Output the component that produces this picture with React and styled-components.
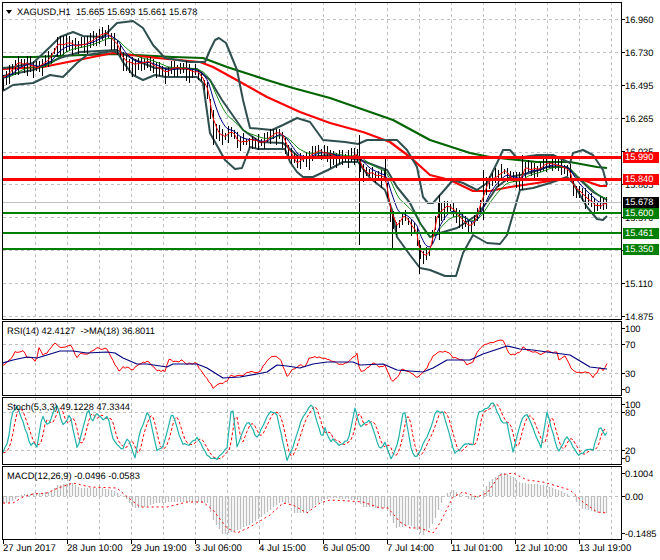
import styled, { createGlobalStyle } from 'styled-components';

const GlobalStyle = createGlobalStyle`
  html, body { margin: 0; padding: 0; background: #fff; }
  body { width: 660px; height: 560px; overflow: hidden; font-family: "Liberation Sans", Arial, sans-serif; text-rendering: geometricPrecision; }
`;

const Page = styled.div`
  width: 660px;
  height: 560px;
  padding: 2px 0 0 2px;
  box-sizing: border-box;
  display: flex;
  flex-direction: column;
  gap: 1px;
  background: #fff;
`;

const Pane = styled.div`
  display: flex;
  height: ${(p) => p.$h}px;
`;

const Plot = styled.div`
  position: relative;
  width: 620px;
  height: 100%;
  box-sizing: border-box;
  border: 1px solid #000;
  overflow: hidden;
  svg { display: block; }
`;

const Legend = styled.div`
  position: absolute;
  left: ${(p) => p.$left}px;
  top: ${(p) => p.$top}px;
  display: flex;
  align-items: center;
  gap: 5px;
  font-size: 9.3px;
  line-height: 12px;
  color: #000;
  white-space: pre;
`;

const Arrow = styled.span`
  width: 0;
  height: 0;
  border-left: 3.5px solid transparent;
  border-right: 3.5px solid transparent;
  border-top: 4px solid #000;
`;

const Scale = styled.div`
  position: relative;
  width: 38px;
  font-size: 9.3px;
  color: #000;
`;

const Level = styled.span`
  position: absolute;
  left: 3px;
  top: ${(p) => p.$y - 5}px;
  line-height: 12px;
  &::before {
    content: '';
    position: absolute;
    left: -3px;
    top: 5px;
    width: 3px;
    height: 1px;
    background: #000;
  }
`;

const PriceTag = styled.span`
  position: absolute;
  left: 1px;
  top: ${(p) => p.$y - 5}px;
  width: 36px;
  height: 11px;
  padding-left: 2px;
  box-sizing: border-box;
  line-height: 11px;
  color: #fff;
  background: ${(p) => p.$bg};
`;

const TimeAxis = styled.div`
  display: flex;
  margin-left: 1px;
  margin-top: -1px;
  font-size: 9.6px;
  color: #000;
`;

const TimeCell = styled.div`
  position: relative;
  width: 64px;
  height: 16px;
  padding: 3px 0 0 0;
  box-sizing: border-box;
  line-height: 12px;
  white-space: nowrap;
  &::before {
    content: '';
    position: absolute;
    left: 0;
    top: 0;
    width: 1px;
    height: 4px;
    background: #000;
  }
`;

const GridLine = styled.line`
  stroke: #c0c0c0;
  stroke-width: 1;
  stroke-dasharray: 3 3;
  shape-rendering: crispEdges;
`;

const FlatLine = styled.line`
  stroke: ${(p) => p.$color};
  stroke-width: ${(p) => p.$w}px;
  shape-rendering: crispEdges;
`;

const Trace = styled.polyline`
  fill: none;
  stroke: ${(p) => p.$color};
  stroke-width: ${(p) => p.$w}px;
  stroke-linejoin: round;
  stroke-dasharray: ${(p) => p.$dash || 'none'};
`;

const Bars = styled.path`
  fill: none;
  stroke: ${(p) => p.$color};
  stroke-width: ${(p) => p.$w}px;
`;

// main chart, all in page pixels
const bbUpper = [[3,68],[13,67],[33,63],[50,47],[60,37],[73,32],[83,36],[103,37],[117,23],[133,21],[143,28],[153,45],[165,58],[190,62],[205,62],[210,50],[215,40],[219,38],[226,43],[237,70],[243,100],[250,128],[272,130],[283,125],[297,118],[310,122],[323,140],[345,142],[358,144],[367,140],[390,140],[397,140],[407,150],[417,167],[423,197],[428,203],[433,203],[447,187],[453,180],[463,183],[477,190],[487,183],[497,163],[503,150],[510,150],[517,158],[537,155],[553,155],[570,163],[573,153],[583,150],[593,155],[603,170],[607,185]];
const bbMid = [[3,76],[33,70],[60,58],[80,52],[117,50],[135,60],[155,68],[197,69],[210,80],[222,100],[243,130],[260,142],[283,143],[300,158],[330,155],[360,160],[387,170],[397,187],[410,203],[420,223],[430,237],[440,233],[457,228],[477,215],[487,202],[497,187],[510,177],[530,173],[547,167],[567,167],[577,177],[593,192],[607,200]];
const bbLower = [[3,91],[13,85],[33,83],[50,75],[63,77],[77,63],[87,55],[113,51],[118,53],[123,62],[133,75],[143,80],[155,75],[165,77],[197,77],[203,83],[210,133],[225,160],[235,169],[242,168],[250,147],[258,149],[285,149],[290,162],[297,172],[303,177],[313,177],[328,170],[343,162],[358,162],[370,178],[385,190],[392,210],[397,237],[410,255],[420,268],[430,270],[445,276],[456,276],[463,253],[473,235],[487,243],[500,244],[507,235],[520,190],[533,188],[550,183],[567,177],[573,183],[587,207],[597,219],[603,220],[607,216]];
const maRed = [[3,69],[43,67],[113,53],[157,58],[200,62],[213,67],[233,78],[267,97],[300,112],[330,123],[363,132],[390,142],[410,157],[430,175],[450,180],[473,191],[490,191],[510,187],[537,183],[563,179],[583,180],[600,186],[607,186]];
const maGreen = [[3,57],[33,57],[83,55],[117,54],[173,57],[203,58],[227,67],[267,80],[293,88],[330,98],[393,120],[430,140],[470,153],[490,157],[537,162],[570,162],[597,167],[607,168]];
const price = [[3,78],[10,72],[17,63],[27,63],[37,68],[43,63],[50,58],[57,45],[67,43],[77,45],[87,43],[97,37],[107,33],[113,40],[118,47],[122,60],[133,65],[147,62],[157,68],[167,73],[173,68],[183,68],[197,72],[203,80],[208,93],[212,120],[218,133],[225,137],[232,131],[238,142],[253,140],[262,143],[272,135],[278,131],[283,137],[290,153],[297,163],[302,158],[307,160],[312,152],[320,151],[330,155],[343,158],[357,155],[362,168],[367,173],[377,175],[385,178],[390,212],[397,227],[403,215],[410,223],[417,235],[418,250],[425,257],[430,248],[433,233],[437,213],[448,205],[453,210],[460,218],[470,227],[475,220],[480,203],[487,183],[497,175],[505,170],[510,178],[520,180],[525,167],[537,170],[547,163],[557,165],[570,172],[573,187],[587,198],[597,207],[607,203]];
const spikes = [[359,135,245],[385,158,182],[392,215,248],[419,240,274],[213,110,145],[439,195,240],[483,170,220],[522,155,190]];

const rsiMain = [[3,365],[10,360],[15,352],[20,353],[23,351],[27,357],[33,358],[36,363],[39,348],[43,356],[50,350],[55,343],[60,348],[72,346],[76,358],[82,353],[87,355],[97,348],[107,349],[113,360],[119,372],[123,367],[128,368],[132,370],[140,363],[148,362],[157,370],[165,371],[168,360],[177,362],[182,360],[187,364],[197,363],[200,370],[207,378],[213,388],[217,384],[227,382],[230,375],[240,376],[250,372],[260,372],[267,360],[272,356],[280,358],[287,376],[295,368],[300,365],[305,367],[310,357],[315,357],[322,358],[330,360],[343,365],[350,360],[357,354],[360,372],[365,370],[373,363],[380,367],[385,365],[392,382],[398,377],[402,368],[408,372],[418,377],[427,368],[433,355],[440,352],[450,352],[453,358],[463,360],[467,365],[473,362],[477,352],[483,346],[493,342],[503,340],[510,355],[520,353],[522,347],[530,351],[542,354],[547,351],[557,353],[558,360],[565,355],[572,370],[577,372],[590,372],[592,378],[597,372],[600,366],[603,370],[607,364]];
const rsiSignal = [[3,363],[13,360],[27,357],[37,358],[47,355],[60,351],[73,351],[87,353],[107,352],[115,353],[123,358],[137,364],[147,364],[167,367],[173,364],[197,364],[207,368],[223,378],[240,377],[257,374],[267,372],[277,365],[287,366],[300,368],[313,364],[327,362],[353,362],[360,365],[383,364],[397,370],[423,372],[433,368],[447,360],[470,360],[483,354],[507,346],[520,349],[533,350],[547,352],[570,355],[590,367],[607,369]];

const stoch = [[3,452],[8,442],[12,412],[17,407],[23,422],[28,437],[30,447],[33,442],[37,447],[42,415],[48,427],[55,408],[57,405],[63,425],[70,415],[77,448],[80,440],[88,408],[92,422],[97,413],[103,420],[108,415],[112,437],[122,450],[128,438],[135,457],[140,432],[148,411],[157,450],[163,447],[172,412],[182,443],[190,445],[197,437],[203,448],[208,457],[217,459],[227,448],[232,402],[237,446],[248,420],[257,438],[270,411],[277,415],[287,460],[293,447],[302,418],[312,404],[322,438],[325,428],[330,442],[333,438],[339,446],[348,440],[355,409],[360,427],[370,420],[380,450],[385,443],[391,459],[398,443],[404,407],[412,453],[417,457],[430,430],[436,411],[443,412],[455,454],[465,443],[473,445],[478,412],[487,408],[493,402],[502,422],[507,423],[513,452],[522,418],[527,414],[533,428],[541,448],[547,412],[558,452],[567,436],[578,455],[588,450],[593,450],[600,425],[606,438],[607,433]];

const macdHist = [[3,503],[10,503],[20,495],[27,494],[50,492],[57,485],[72,483],[80,488],[100,488],[113,490],[120,495],[127,500],[133,508],[143,507],[157,503],[177,502],[193,502],[207,503],[213,520],[223,535],[237,530],[253,523],[267,512],[280,502],[290,503],[293,513],[307,513],[317,503],[330,498],[357,500],[363,507],[387,508],[395,528],[410,525],[423,535],[433,523],[442,500],[447,493],[453,490],[463,496],[473,501],[480,496],[490,480],[503,472],[513,477],[520,483],[543,485],[563,492],[573,497],[580,508],[597,513],[607,513]];
const macdSignal = [[3,503],[13,503],[23,497],[33,494],[47,493],[58,488],[73,483],[90,487],[117,488],[125,495],[140,507],[167,507],[187,502],[203,502],[213,510],[227,528],[237,533],[250,527],[270,515],[283,503],[293,505],[307,513],[320,503],[330,500],[350,501],[363,502],[380,508],[388,508],[400,522],[410,528],[420,528],[433,533],[440,523],[453,497],[463,492],[477,497],[487,493],[500,475],[513,473],[527,480],[543,482],[560,487],[570,490],[583,502],[597,512],[607,513]];

const spanX = (lo, hi, step) => {
  const out = [];
  for (let x = lo; x <= hi; x += step) out.push(x);
  return out;
};

const yAt = (path, x) => {
  for (let i = 1; i < path.length; i++) {
    if (x <= path[i][0]) {
      const [x0, y0] = path[i - 1];
      const [x1, y1] = path[i];
      return y0 + ((y1 - y0) * (x - x0)) / (x1 - x0 || 1);
    }
  }
  return path[path.length - 1][1];
};

const noise = (n) => {
  const v = Math.sin(n * 12.9898) * 43758.5453;
  return v - Math.floor(v);
};

const ema = (values, period) => {
  const k = 2 / (period + 1);
  let last = values[0];
  return values.map((v) => (last = last + k * (v - last)));
};

const toPoints = (xs, ys) => xs.map((x, i) => `${x},${ys[i].toFixed(1)}`).join(' ');
const raw = (path) => path.map((p) => p.join(',')).join(' ');

const lineX = spanX(3, 607, 2);
const barX = spanX(3, 607, 3);

const lineY = lineX.map((x) => yAt(price, x));
const fastY = lineY.map((y, i) => y + (noise(i) - 0.5) * 3);

let candleD = barX
  .map((x, i) => {
    const y = yAt(price, x);
    const up = 2 + noise(i + 300) * 7;
    const down = 3 + noise(i + 700) * 10;
    return `M${x + 0.5} ${(y - up).toFixed(0)}V${(y + down).toFixed(0)}`;
  })
  .join('');
spikes.forEach(([x, y0, y1]) => {
  candleD += `M${x + 0.5} ${y0}V${y1}`;
});

const rsiY = lineX.map((x, i) => yAt(rsiMain, x) + (noise(i + 40) - 0.5) * 2);

const stochY = lineX.map((x, i) => yAt(stoch, x) + (noise(i + 90) - 0.5) * 2);
const stochSignal = stochY.map((_, i) => {
  const a = stochY[Math.max(0, i - 1)];
  const b = stochY[Math.max(0, i - 2)];
  const c = stochY[Math.max(0, i - 3)];
  return (a + b + c) / 3;
});

const histD = barX.map((x) => `M${x + 0.5} 496V${yAt(macdHist, x).toFixed(0)}`).join('');

const gridX = spanX(35, 611, 32);

function Chart({ top, height, rows, children }) {
  return (
    <svg width="618" height={height - 2} viewBox={`3 ${top + 1} 618 ${height - 2}`}>
      {gridX.map((x) => (
        <GridLine key={x} x1={x + 0.5} x2={x + 0.5} y1={top} y2={top + height} />
      ))}
      {rows.map((y) => (
        <GridLine key={y} x1="3" x2="621" y1={y + 0.5} y2={y + 0.5} />
      ))}
      {children}
    </svg>
  );
}

const priceLevels = [
  ['16.960', 19], ['16.730', 52], ['16.495', 85], ['16.265', 118], ['16.035', 151],
  ['15.805', 184], ['15.570', 217], ['15.340', 250], ['15.110', 283], ['14.875', 316],
];
const priceTags = [
  ['15.990', 157, '#ff0000'], ['15.840', 179, '#ff0000'], ['15.678', 202, '#000000'],
  ['15.600', 213, '#008000'], ['15.461', 233, '#008000'], ['15.350', 249, '#008000'],
];
const timeLabels = [
  '27 Jun 2017', '28 Jun 10:00', '29 Jun 19:00', '3 Jul 06:00', '4 Jul 15:00',
  '6 Jul 05:00', '7 Jul 14:00', '11 Jul 01:00', '12 Jul 10:00', '13 Jul 19:00',
];

function App() {
  return (
    <Page>
      <GlobalStyle />

      {/* price window */}
      <Pane $h={318}>
        <Plot>
          <Chart top={2} height={318} rows={[19, 52, 85, 118, 152, 184, 217, 250, 283, 316]}>
            <Trace points={raw(maGreen)} $color="#006400" $w={2.2} />
            <Trace points={raw(maRed)} $color="#ff0000" $w={2.2} />
            <Trace points={raw(bbUpper)} $color="#2f4f4f" $w={2} />
            <Trace points={raw(bbMid)} $color="#2f4f4f" $w={2} />
            <Trace points={raw(bbLower)} $color="#2f4f4f" $w={2} />
            <Bars d={candleD} $color="#000" $w={1} />
            <Trace points={toPoints(lineX, ema(lineY, 16))} $color="#008000" $w={0.9} />
            <Trace points={toPoints(lineX, ema(lineY, 8))} $color="#000080" $w={1} />
            <Trace points={toPoints(lineX, ema(fastY, 2))} $color="#ff0000" $w={1} />
            <FlatLine x1="3" x2="621" y1="202.5" y2="202.5" $color="#c0c0c0" $w={1} />
            <FlatLine x1="3" x2="621" y1="157" y2="157" $color="#ff0000" $w={3} />
            <FlatLine x1="3" x2="621" y1="179" y2="179" $color="#ff0000" $w={3} />
            <FlatLine x1="3" x2="621" y1="213" y2="213" $color="#008000" $w={2} />
            <FlatLine x1="3" x2="621" y1="233" y2="233" $color="#008000" $w={2} />
            <FlatLine x1="3" x2="621" y1="249" y2="249" $color="#008000" $w={2} />
          </Chart>
          <Legend $left={3} $top={3}>
            <Arrow />
            <span>XAGUSD,H1  15.665 15.693 15.661 15.678</span>
          </Legend>
        </Plot>
        <Scale>
          {priceLevels.map(([label, y]) => (
            <Level key={label} $y={y - 2}>{label}</Level>
          ))}
          {priceTags.map(([label, y, bg]) => (
            <PriceTag key={label} $y={y - 2} $bg={bg}>{label}</PriceTag>
          ))}
        </Scale>
      </Pane>

      {/* RSI */}
      <Pane $h={75}>
        <Plot>
          <Chart top={321} height={75} rows={[344, 373]}>
            <Trace points={toPoints(lineX, rsiY)} $color="#ff0000" $w={1} />
            <Trace points={raw(rsiSignal)} $color="#000080" $w={1.2} />
          </Chart>
          <Legend $left={4} $top={3}>RSI(14) 42.4127  -&gt;MA(18) 36.8011</Legend>
        </Plot>
        <Scale>
          <Level $y={7}>100</Level>
          <Level $y={23}>70</Level>
          <Level $y={52}>30</Level>
          <Level $y={68}>0</Level>
        </Scale>
      </Pane>

      {/* Stochastic */}
      <Pane $h={68}>
        <Plot>
          <Chart top={397} height={68} rows={[412, 450]}>
            <Trace points={toPoints(lineX, stochSignal)} $color="#ff0000" $w={1} $dash="3 2" />
            <Trace points={toPoints(lineX, stochY)} $color="#20b2aa" $w={1.2} />
          </Chart>
          <Legend $left={4} $top={3}>Stoch(5,3,3) 49.1228 47.3344</Legend>
        </Plot>
        <Scale>
          <Level $y={7}>100</Level>
          <Level $y={15}>80</Level>
          <Level $y={53}>20</Level>
          <Level $y={61}>0</Level>
        </Scale>
      </Pane>

      {/* MACD */}
      <Pane $h={74}>
        <Plot>
          <Chart top={466} height={74} rows={[496]}>
            <Bars d={histD} $color="#bdbdbd" $w={1.3} />
            <Trace points={raw(macdSignal)} $color="#ff0000" $w={1} $dash="2 3" />
          </Chart>
          <Legend $left={4} $top={3}>MACD(12,26,9) -0.0496 -0.0583</Legend>
        </Plot>
        <Scale>
          <Level $y={7}>0.1004</Level>
          <Level $y={30}>0.00</Level>
          <Level $y={67}>-0.1485</Level>
        </Scale>
      </Pane>

      <TimeAxis>
        {timeLabels.map((label) => (
          <TimeCell key={label}>{label}</TimeCell>
        ))}
      </TimeAxis>
    </Page>
  );
}

export default App;
